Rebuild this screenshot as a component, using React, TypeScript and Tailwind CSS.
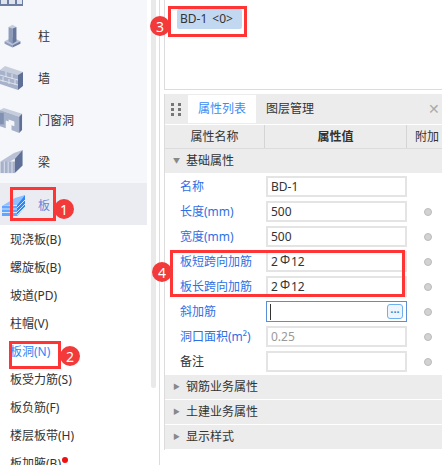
const CJK = "font-['Noto_Sans','Noto_Sans_CJK_SC',sans-serif]";

function Badge({ n, className }: { n: number; className: string }) {
    return (
        <div className={"absolute z-20 flex h-[20px] w-[20px] items-center justify-center rounded-full bg-[#f23a3a] text-[14px] text-white " + className}>
            {n}
        </div>
    );
}

function Mark({ className }: { className: string }) {
    return <div className={"absolute z-10 border-[3px] border-[#ff3535] " + className} />;
}

function WindowIcon() {
    return (
        <svg width="24" height="42" viewBox="0 0 24 42">
            <path d="M0 26h23v7H0z" fill="#6d7ea3" />
            <path d="M1 26h6v5H1zM9 26h6v5H9zM17 26h5v5h-5z" fill="#dfe3ee" />
        </svg>
    );
}

function ColumnIcon() {
    return (
        <svg width="19" height="25" viewBox="0 0 24 30" className="ml-[3px]">
            <path d="M2 21l10-5 10 5-10 5z" fill="#b8c1d6" />
            <path d="M2 21l10 5v3L2 24z" fill="#8e9cbb" />
            <path d="M22 21l-10 5v3l10-5z" fill="#6d7ea3" />
            <path d="M7 3l5-3 5 3-5 2z" fill="#c6cddd" />
            <path d="M7 3l5 2v19l-5-3z" fill="#8e9cbb" />
            <path d="M17 3l-5 2v19l5-3z" fill="#66779d" />
        </svg>
    );
}

function WallIcon() {
    return (
        <svg width="24" height="24" viewBox="0 0 24 24">
            <path d="M0 4l5-4 18 6-5 3z" fill="#c6cddd" />
            <path d="M0 4l18 5v15L0 18z" fill="#a6b1ca" />
            <path d="M23 6l-5 3v15l5-4z" fill="#5f7097" />
            <path d="M0 9l18 5M0 14l18 5M6 6v5M12 8v5M3 11v5M9 13v5M15 14v5" stroke="#dfe3ee" strokeWidth="1" fill="none" />
        </svg>
    );
}

function DoorIcon() {
    return (
        <svg width="23" height="25" viewBox="0 0 24 26">
            <path d="M0 2l4-2 19 6-3 3z" fill="#c6cddd" />
            <path d="M0 2l20 7v17l-8-3v-8l-6-2v8l-6-2z" fill="#a6b1ca" />
            <path d="M9 12l6 2v5l-6-2z" fill="#f5f6fa" />
            <path d="M23 6l-3 3v17l3-3z" fill="#5f7097" />
            <path d="M0 5h4v12H0z" fill="#7283a8" opacity="0.7" />
        </svg>
    );
}

function BeamIcon() {
    return (
        <svg width="24" height="25" viewBox="0 0 24 26">
            <path d="M0 12L14 3l9-3-8 9-7 4z" fill="#b8c1d6" />
            <path d="M0 12h15v12H0z" fill="#a6b1ca" />
            <path d="M23 0v16l-8 8V9z" fill="#5f7097" />
            <path d="M4 12v12M8 12v12M12 12v12" stroke="#dfe3ee" strokeWidth="1" />
        </svg>
    );
}

function SlabIcon() {
    return (
        <svg width="24" height="24" viewBox="0 0 24 24" className="ml-px mt-[3px]">
            <path d="M1 12L14 4l10-3-8 10z" fill="#8fc0ff" />
            <path d="M1 12h15v10H1z" fill="#60a5ff" />
            <path d="M1 15h15M1 18.5h15" stroke="#d6e8ff" strokeWidth="1" />
            <path d="M24 1v12l-8 9V11z" fill="#2f86f5" />
            <path d="M16 14l8-8M16 18l8-8M16 21l8-8" stroke="#cfe3ff" strokeWidth="1" />
        </svg>
    );
}

function SideItem({ label, children, active }: { label: string; children: React.ReactNode; active?: boolean }) {
    return (
        <div className={"flex h-[42px] items-center overflow-hidden " + (active ? "bg-[#ebecf1] text-[#6a85d6]" : "text-[#333]")}>
            <div className="flex w-[38px] shrink-0 items-center">{children}</div>
            <span className={active ? "pt-[3px]" : "pt-[2px]"}>{label}</span>
        </div>
    );
}

function PropRow({ label, value, blue = true, dim, dot = true, focus }: { label: string; value?: React.ReactNode; blue?: boolean; dim?: boolean; dot?: boolean; focus?: boolean }) {
    return (
        <div className="flex h-[25px] items-center">
            <div className={"w-[101px] pl-[15px] " + (blue ? "text-[#2f6fe4]" : "text-[#333]")}>{label}</div>
            <div className={"flex h-[21px] w-[141px] items-center justify-between border pl-[3px] pr-[3px] " + (focus ? "border-[#5b8dd9]" : "border-2 border-[#e4e4e4]") + (dim ? " text-[#999]" : " text-[#333]")}>
                {focus ? <span className="h-[16px] w-px bg-[#333]" /> : <span>{value}</span>}
                {focus && (
                    <span className="flex h-[15px] w-[16px] items-center justify-center rounded-[3px] border border-[#6fb0ee] bg-[#eef5fc] text-[11px] font-bold leading-none text-[#3b82d6]">
                        ···
                    </span>
                )}
            </div>
            <div className="flex flex-1 justify-center pl-[7px]">
                {dot && <span className="h-[8px] w-[8px] rounded-full border border-[#bbb] bg-[#d2d2d2]" />}
            </div>
        </div>
    );
}

function Group({ label, open }: { label: string; open?: boolean }) {
    return (
        <div className="mb-px flex h-[24px] items-center bg-[#ececec] text-[#333]">
            <span className="flex w-[21px] justify-center pl-[2px] text-[7px] text-[#888]">{open ? "▼" : "▶"}</span>
            <span>{label}</span>
        </div>
    );
}

const Rebar = (
    <>
        2<span className="relative top-[-2px] pl-[2px] pr-px text-[12px]">Φ</span>12
    </>
);

export default function App() {
    const list = ["现浇板(B)", "螺旋板(B)", "坡道(PD)", "柱帽(V)", "板洞(N)", "板受力筋(S)", "板负筋(F)", "楼层板带(H)", "板加腋(B)"];

    return (
        <div className={"relative flex h-[465px] w-[442px] overflow-hidden bg-white text-[12px] " + CJK}>
            <div className="w-[147px] shrink-0">
                <div className="-mt-[27px] bg-[#f6f7fa]">
                    <SideItem label=""><WindowIcon /></SideItem>
                    <SideItem label="柱"><ColumnIcon /></SideItem>
                    <SideItem label="墙"><WallIcon /></SideItem>
                    <SideItem label="门窗洞"><DoorIcon /></SideItem>
                    <SideItem label="梁"><BeamIcon /></SideItem>
                    <SideItem label="板" active><SlabIcon /></SideItem>
                </div>
                <div className="pl-[10px] pt-[1.5px]">
                    {list.map((t) => (
                        <div key={t} className={"relative flex h-[27.9px] items-center " + (t === "板洞(N)" ? "text-[#2f86f5]" : "text-[#333]")}>
                            {t}
                            {t === "板加腋(B)" && <span className="absolute left-[52px] top-[7px] h-[6px] w-[6px] rounded-full bg-[#f01010]" />}
                        </div>
                    ))}
                </div>
            </div>

            <div className="ml-[4px] h-[388px] w-[5px] shrink-0 rounded-b-sm bg-[#e9e9e9]" />
            <div className="ml-[3px] w-[5px] shrink-0 border-l border-[#dcdcdc]" />

            <div className="flex min-w-0 flex-1 flex-col">
                <div className="h-[90px] shrink-0 border-b border-l border-[#dcdcdc] pl-[12px] pt-[9px]">
                    <div className="flex h-[20px] w-[65px] items-center gap-[5px] rounded-[2px] bg-[#c2d8f0] pl-[3px] text-[#333]">
                        <span>BD-1</span>
                        <span>&lt;0&gt;</span>
                    </div>
                </div>
                <div className="mt-[4px] border-l border-[#dcdcdc]">
                    <div className="flex h-[30px] items-center bg-[#ececec]">
                        <div className="grid w-[23px] grid-cols-2 justify-center gap-[2px] pl-[6px] pr-[5px]">
                            {[0, 1, 2, 3, 4, 5].map((i) => (
                                <span key={i} className="h-[3px] w-[3px] bg-[#777]" />
                            ))}
                        </div>
                        <div className="flex h-[28px] w-[68px] items-center justify-center bg-white text-[#3c8cf5]">属性列表</div>
                        <div className="pl-[10px] text-[#333]">图层管理</div>
                        <div className="ml-auto pr-[2px] text-[14px] leading-none text-[#aaa]">✕</div>
                    </div>
                    <div className="mt-px flex h-[24px] items-center border-b border-[#dcdcdc] bg-[#ececec] text-[#333]">
                        <div className="flex h-full w-[100px] items-center justify-center border-r border-[#d4d4d4]">属性名称</div>
                        <div className="flex h-full w-[142px] items-center justify-center border-r border-[#d4d4d4] font-bold">属性值</div>
                        <div className="pl-[8px]">附加</div>
                    </div>
                    <Group label="基础属性" open />
                    <div className="pb-px">
                        <PropRow label="名称" value="BD-1" blue dot={false} />
                        <PropRow label="长度(mm)" value="500" />
                        <PropRow label="宽度(mm)" value="500" />
                        <PropRow label="板短跨向加筋" value={Rebar} />
                        <PropRow label="板长跨向加筋" value={Rebar} />
                        <PropRow label="斜加筋" focus />
                        <PropRow label="洞口面积(m²)" value="0.25" dim />
                        <PropRow label="备注" blue={false} />
                    </div>
                    <Group label="钢筋业务属性" />
                    <Group label="土建业务属性" />
                    <Group label="显示样式" />
                </div>
            </div>

            <Mark className="left-[10px] top-[187px] h-[34px] w-[46px]" />
            <Badge n={1} className="left-[54px] top-[199px]" />
            <Mark className="left-[9px] top-[341px] h-[28px] w-[52px]" />
            <Badge n={2} className="left-[60px] top-[346px]" />
            <Mark className="left-[168px] top-[6px] h-[31px] w-[79px]" />
            <Badge n={3} className="left-[150px] top-[16px]" />
            <Mark className="left-[170px] top-[250px] h-[47px] w-[235px]" />
            <Badge n={4} className="left-[152px] top-[262px]" />
        </div>
    );
}
